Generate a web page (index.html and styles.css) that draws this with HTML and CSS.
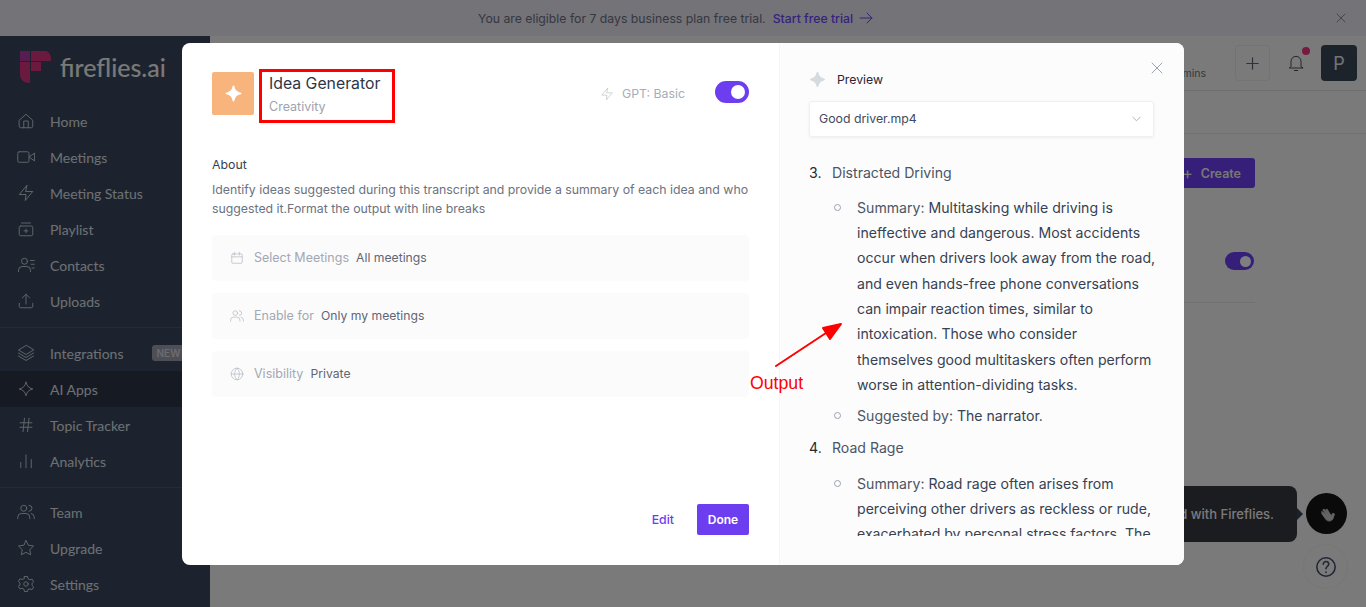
FILE: index.html
```html
<!DOCTYPE html>
<html>
<head>
    <meta charset="utf-8">
    <title>Fireflies.ai - AI Apps</title>
    <link rel="stylesheet" href="styles.css">
</head>
<body>
    <div class="banner">
        <span>You are eligible for 7 days business plan free trial.</span>
        <a class="banner-link">Start free trial</a>
        <svg class="banner-arrow" viewBox="0 0 14 12"><path d="M1 6h12M8 1l5 5-5 5"/></svg>
        <svg class="banner-close" viewBox="0 0 10 10"><path d="M1 1l8 8M9 1l-8 8"/></svg>
    </div>

    <div class="app">
        <div class="sidebar">
            <div class="logo">
                <svg class="logo-mark" viewBox="0 0 31 32">
                    <path class="logo-a" d="M0 0h10v10H0z"/>
                    <path class="logo-b" d="M11 0h14c4 0 6 3 6 10H11zM0 11h10v21c-6 0-10-3-10-9zM11 11h10v9H11z"/>
                </svg>
                <span>fireflies.ai</span>
            </div>

            <div class="nav">
                <div class="nav-item"><svg viewBox="0 0 24 24"><path d="M3 11l9-8 9 8v8a2 2 0 0 1-2 2H5a2 2 0 0 1-2-2zM9 21v-9h6v9"/></svg>Home</div>
                <div class="nav-item"><svg viewBox="0 0 24 24"><rect x="1" y="5" width="15" height="14" rx="2"/><path d="M23 7l-7 5 7 5z"/></svg>Meetings</div>
                <div class="nav-item"><svg viewBox="0 0 24 24"><path d="M13 2L3 14h9l-1 8 10-12h-9z"/></svg>Meeting Status</div>
                <div class="nav-item"><svg viewBox="0 0 24 24"><rect x="3" y="8" width="18" height="13" rx="2"/><path d="M6 4h12M12 12v5M9.500 14.500h5"/></svg>Playlist</div>
                <div class="nav-item"><svg viewBox="0 0 24 24"><circle cx="10" cy="7" r="4"/><path d="M2 21v-2a5 5 0 0 1 5-5h6a5 5 0 0 1 5 5v2M18 6h5M19 11h4M20 16h3"/></svg>Contacts</div>
                <div class="nav-item"><svg viewBox="0 0 24 24"><path d="M3 15v4a2 2 0 0 0 2 2h14a2 2 0 0 0 2-2v-4M12 16V3M7 8l5-5 5 5"/></svg>Uploads</div>
            </div>

            <div class="nav nav-divided nav-tools">
                <div class="nav-item"><svg viewBox="0 0 24 24"><path d="M12 2L2 8l10 6 10-6zM2 12l10 6 10-6M2 16l10 6 10-6"/></svg>Integrations<span class="nav-new">NEW</span></div>
                <div class="nav-item active"><svg viewBox="0 0 24 24"><path d="M12 3c1 5 4 8 9 9-5 1-8 4-9 9-1-5-4-8-9-9 5-1 8-4 9-9z"/></svg>AI Apps</div>
                <div class="nav-item"><svg viewBox="0 0 24 24"><path d="M4 9h16M4 15h16M10 3L8 21M16 3l-2 18"/></svg>Topic Tracker</div>
                <div class="nav-item"><svg viewBox="0 0 24 24"><path d="M5 21v-7M12 21V4M19 21v-11"/></svg>Analytics</div>
            </div>

            <div class="nav nav-divided">
                <div class="nav-item"><svg viewBox="0 0 24 24"><circle cx="9" cy="7" r="4"/><path d="M1 21v-2a5 5 0 0 1 5-5h6a5 5 0 0 1 5 5v2M16 3a4 4 0 0 1 0 8M19 14a5 5 0 0 1 4 5v2"/></svg>Team</div>
                <div class="nav-item"><svg viewBox="0 0 24 24"><path d="M12 2l3.100 6.300 6.900 1-5 4.900 1.200 6.800-6.200-3.200L5.800 21 7 14.200l-5-4.900 6.900-1z"/></svg>Upgrade</div>
                <div class="nav-item"><svg viewBox="0 0 24 24"><circle cx="12" cy="12" r="3"/><path d="M10 2h4l.7 3 2.500 1.400 3-.9 2 3.500-2.200 2.100v2.800l2.200 2.100-2 3.500-3-.9L14.700 19 14 22h-4l-.7-3-2.500-1.400-3 .9-2-3.500L4 13.400v-2.800L1.800 8.500l2-3.500 3 .9L9.300 5z"/></svg>Settings</div>
            </div>
        </div>

        <div class="main">
            <div class="topbar">
                <span class="topbar-mins">mins</span>
                <div class="topbar-add">
                    <svg viewBox="0 0 16 16"><path d="M8 1v14M1 8h14"/></svg>
                </div>
                <div class="topbar-bell">
                    <svg viewBox="0 0 24 24"><path d="M18 16V10a6 6 0 0 0-12 0v6l-2 2h16zM10 21h4"/></svg>
                    <span class="bell-dot"></span>
                </div>
                <div class="avatar">P</div>
            </div>
            <div class="subbar"></div>
            <div class="content">
                <div class="create-row">
                    <div class="create-btn"><span class="create-plus">+</span>Create</div>
                </div>
                <div class="app-row">
                    <span class="toggle toggle-small"><span class="toggle-knob"></span></span>
                </div>
            </div>
        </div>
    </div>

    <div class="toast">Get started with Fireflies.</div>
    <div class="wave">
        <svg viewBox="0 0 24 24"><path d="M6 12l5 7c2 2 6 2 8-1l2-6-2-1-2 3-5-8-1.500 1 3 5-5-6-1.500 1 4 6-5-4z"/></svg>
    </div>
    <div class="help">
        <svg viewBox="0 0 24 24"><circle cx="12" cy="12" r="10"/><path d="M9 9a3 3 0 0 1 6 0c0 2-3 2.500-3 5M12 17.500v.5"/></svg>
    </div>

    <div class="overlay">
        <div class="modal">
            <div class="modal-left">
                <div class="app-head">
                    <div class="app-icon">
                        <svg viewBox="0 0 24 24"><path d="M12 2c1 6 4 9 10 10-6 1-9 4-10 10-1-6-4-9-10-10 6-1 9-4 10-10z"/></svg>
                    </div>
                    <div class="app-title">
                        <div class="app-name">Idea Generator</div>
                        <div class="app-category">Creativity</div>
                    </div>
                    <div class="app-gpt">
                        <svg viewBox="0 0 24 24"><path d="M13 2L3 14h9l-1 8 10-12h-9z"/></svg>
                        GPT: Basic
                    </div>
                    <span class="toggle"><span class="toggle-knob"></span></span>
                </div>

                <div class="about-label">About</div>
                <p class="about-text">Identify ideas suggested during this transcript and provide a summary of each idea and who suggested it.Format the output with line breaks</p>

                <div class="setting">
                    <svg viewBox="0 0 24 24"><rect x="3" y="5" width="18" height="16" rx="2"/><path d="M3 10h18M8 2v5M16 2v5"/></svg>
                    <span class="setting-label">Select Meetings</span>
                    <span class="setting-value">All meetings</span>
                </div>
                <div class="setting">
                    <svg viewBox="0 0 24 24"><circle cx="9" cy="7" r="4"/><path d="M1 21v-2a5 5 0 0 1 5-5h6a5 5 0 0 1 5 5v2M16 3a4 4 0 0 1 0 8M19 14a5 5 0 0 1 4 5v2"/></svg>
                    <span class="setting-label">Enable for</span>
                    <span class="setting-value">Only my meetings</span>
                </div>
                <div class="setting">
                    <svg viewBox="0 0 24 24"><circle cx="12" cy="12" r="10"/><path d="M2 12h20M12 2c3 3 4 6 4 10s-1 7-4 10c-3-3-4-6-4-10s1-7 4-10z"/></svg>
                    <span class="setting-label">Visibility</span>
                    <span class="setting-value">Private</span>
                </div>

                <div class="actions">
                    <span class="edit-link">Edit</span>
                    <span class="done-btn">Done</span>
                </div>
            </div>

            <div class="modal-right">
                <svg class="modal-close" viewBox="0 0 12 12"><path d="M1 1l10 10M11 1L1 11"/></svg>
                <div class="preview-head">
                    <svg viewBox="0 0 24 24"><path d="M12 3c1 5 4 8 9 9-5 1-8 4-9 9-1-5-4-8-9-9 5-1 8-4 9-9z"/></svg>
                    Preview
                </div>
                <div class="preview-select">
                    Good driver.mp4
                    <svg viewBox="0 0 10 6"><path d="M1 1l4 4 4-4"/></svg>
                </div>
                <div class="output">
                    <ol class="output-list">
                        <li>Distracted Driving
                            <ul>
                                <li><span class="output-key">Summary:</span> Multitasking while driving is ineffective and dangerous. Most accidents occur when drivers look away from the road, and even hands-free phone conversations can impair reaction times, similar to intoxication. Those who consider themselves good multitaskers often perform worse in attention-dividing tasks.</li>
                                <li><span class="output-key">Suggested by:</span> The narrator.</li>
                            </ul>
                        </li>
                        <li>Road Rage
                            <ul>
                                <li><span class="output-key">Summary:</span> Road rage often arises from perceiving other drivers as reckless or rude, exacerbated by personal stress factors. The</li>
                            </ul>
                        </li>
                    </ol>
                </div>
            </div>

            <!-- annotations drawn on top of the screenshot -->
            <div class="note-box"></div>
            <svg class="note-arrow" viewBox="0 0 70 46">
                <path d="M3 44L56 9" />
                <polygon points="68,2 50,6 57,17"/>
            </svg>
            <span class="note-text">Output</span>
        </div>
    </div>
</body>
</html>
```

FILE: styles.css
```css
* {
    box-sizing: border-box;
}

html, body {
    height: 100%;
}

body {
    margin: 0;
    overflow: hidden;
    background: #f5f5f5;
    font-family: "Inter", "Liberation Sans", sans-serif;
    font-size: 12.3px;
    color: #374151;
}

svg {
    fill: none;
    stroke: currentColor;
    stroke-linecap: round;
    stroke-linejoin: round;
}

/* banner */
.banner {
    display: flex;
    align-items: center;
    height: 36px;
    padding: 0 20px 0 478px;
    background: #e6e6f0;
    color: #6f6f84;
    font-size: 12.25px;
}

.banner-link {
    margin-left: 7px;
    color: #6d45ff;
    font-weight: 500;
}

.banner-arrow {
    width: 14px;
    height: 12px;
    margin-left: 6px;
    color: #6d45ff;
}

.banner-close {
    width: 10px;
    height: 10px;
    margin-left: auto;
    color: #8b8b9c;
}

.app {
    display: flex;
    height: 571px;
}

/* sidebar */
.sidebar {
    width: 210px;
    flex: none;
    background: #38465c;
    color: #dde0e6;
    font-family: "Lato", "Liberation Sans", sans-serif;
    font-size: 14px;
}

.logo {
    display: flex;
    align-items: center;
    gap: 9px;
    height: 62px;
    padding: 0 0 0 20px;
    font-size: 25px;
    font-weight: 500;
    color: #f2f2f2;
}

.logo-mark {
    width: 31px;
    height: 32px;
    stroke: none;
}

.logo-a {
    fill: #b03aa0;
}

.logo-b {
    fill: #d9327e;
}

.nav {
    padding-top: 5px;
}

.nav-divided {
    margin-top: 8px;
    padding-top: 6px;
    border-top: 1px solid #4a576b;
}

.nav-tools {
    padding-top: 7px;
}

.nav-item {
    display: flex;
    align-items: center;
    height: 36px;
    padding-left: 17px;
}

.nav-item svg {
    width: 18px;
    height: 18px;
    margin-right: 15px;
    stroke-width: 1.3;
    color: #c6cad2;
}

.nav-item.active {
    background: #2d3646;
}

.nav-new {
    width: 40px;
    margin-left: 29px;
    padding: 2px 4px;
    border-radius: 3px;
    background: #9a9dad;
    color: #d8d8de;
    font-family: "Inter", sans-serif;
    font-size: 10px;
    font-weight: 600;
}

/* main page behind the modal */
.main {
    flex: 1;
    min-width: 0;
}

.topbar {
    display: flex;
    align-items: center;
    justify-content: flex-end;
    height: 55px;
    padding-right: 9px;
    border-bottom: 1px solid #dedede;
    background: #f5f5f5;
}

.topbar-mins {
    margin: 20px 29px 0 0;
    font-size: 10.500px;
    color: #6b7280;
}

.topbar-add {
    display: flex;
    align-items: center;
    justify-content: center;
    width: 35px;
    height: 36px;
    border: 1px solid #e7e7e7;
    border-radius: 4px;
    color: #5e6578;
}

.topbar-add svg {
    width: 13px;
    height: 13px;
    stroke-width: 1.5;
}

.topbar-bell {
    position: relative;
    width: 20px;
    height: 20px;
    margin: 0 15px 0 16px;
    color: #1f2937;
}

.bell-dot {
    position: absolute;
    top: -6px;
    right: -4px;
    width: 8px;
    height: 8px;
    border-radius: 50%;
    background: #f0337f;
}

.avatar {
    display: flex;
    align-items: center;
    justify-content: center;
    width: 36px;
    height: 36px;
    border-radius: 4px;
    background: #3b4657;
    color: #e5e7eb;
    font-size: 18px;
}

.subbar {
    height: 43px;
    border-bottom: 1px solid #e2e2e2;
}

.content {
    padding: 24px 111px 0 0;
}

.create-row {
    display: flex;
    justify-content: flex-end;
}

.create-btn {
    display: flex;
    align-items: center;
    justify-content: flex-end;
    width: 90px;
    height: 30px;
    padding-right: 14px;
    border-radius: 3px;
    background: #6d3ef0;
    color: #eee;
    font-weight: 600;
    font-size: 12.5px;
}

.create-plus {
    margin-right: 8px;
    font-size: 16px;
    font-weight: 400;
}

.app-row {
    display: flex;
    justify-content: flex-end;
    height: 115px;
    margin-left: 800px;
    padding: 64px 1px 0 0;
    border-bottom: 1px solid #e2e2e2;
}

/* floating widgets */
.toast {
    position: absolute;
    top: 486px;
    right: 69px;
    display: flex;
    align-items: center;
    justify-content: flex-end;
    width: 300px;
    height: 56px;
    padding-right: 23px;
    border-radius: 8px;
    background: #36383e;
    color: #f4f4f8;
    font-size: 13px;
    font-weight: 500;
}

.toast::after {
    content: "";
    position: absolute;
    top: 22px;
    left: 100%;
    border-left: 6px solid #36405c;
    border-top: 6px solid transparent;
    border-bottom: 6px solid transparent;
}

.wave {
    position: absolute;
    top: 493px;
    left: 1306px;
    display: flex;
    align-items: center;
    justify-content: center;
    width: 41px;
    height: 41px;
    border-radius: 50%;
    background: #141414;
    color: #c9c9c9;
}

.wave svg {
    width: 20px;
    height: 20px;
    fill: currentColor;
    stroke-width: 1;
}

.help {
    position: absolute;
    top: 544px;
    left: 1303px;
    display: flex;
    align-items: center;
    justify-content: center;
    width: 45px;
    height: 45px;
    border: 1px solid #ececec;
    border-radius: 50%;
    color: #424b6a;
}

.help svg {
    width: 22px;
    height: 22px;
    stroke-width: 1.700;
}

/* modal */
.overlay {
    position: fixed;
    top: 0;
    left: 0;
    right: 0;
    bottom: 0;
    display: flex;
    align-items: center;
    justify-content: center;
    background: rgba(0, 0, 0, 0.5);
}

.modal {
    position: relative;
    display: flex;
    width: 1002px;
    height: 522px;
    border-radius: 8px;
    overflow: hidden;
    background: #fff;
}

.modal-left {
    display: flex;
    flex-direction: column;
    width: 598px;
    padding: 29px 30px 30px;
    border-right: 1px solid #f5f5f6;
}

.app-head {
    display: flex;
    align-items: flex-start;
    height: 43px;
}

.app-icon {
    display: flex;
    align-items: center;
    justify-content: center;
    width: 42px;
    height: 43px;
    border-radius: 2px;
    background: #f8b47d;
    color: #fff;
}

.app-icon svg {
    width: 17px;
    height: 17px;
    fill: currentColor;
    stroke-width: 2.500;
}

.app-title {
    margin-left: 15px;
}

.app-name {
    margin-top: 1px;
    font-size: 15.800px;
    line-height: 22px;
    color: #2c3646;
}

.app-category {
    margin-top: 2px;
    line-height: 20px;
    font-size: 12.500px;
    color: #9ca3af;
}

.app-gpt {
    display: flex;
    align-items: center;
    margin: 12px 30px 0 auto;
    height: 20px;
    color: #a6acb8;
}

.app-gpt svg {
    width: 14px;
    height: 14px;
    margin-right: 8px;
    stroke-width: 1.300;
    color: #c2c6ce;
}

.toggle {
    display: flex;
    align-items: center;
    justify-content: flex-end;
    width: 34px;
    height: 22px;
    margin-top: 9px;
    padding-right: 4px;
    border-radius: 11px;
    background: #6d3ef0;
}

.toggle-knob {
    width: 14px;
    height: 14px;
    border-radius: 50%;
    background: #fff;
}

.toggle-small {
    width: 29px;
    height: 18px;
    margin-top: 0;
    padding-right: 3px;
}

.toggle-small .toggle-knob {
    width: 11px;
    height: 11px;
}

.about-label {
    margin-top: 42px;
    line-height: 16px;
    color: #374151;
}

.about-text {
    margin: 7px 0 17px;
    line-height: 19px;
    color: #6b7280;
}

.setting {
    display: flex;
    align-items: center;
    height: 46px;
    margin-bottom: 12px;
    padding-left: 18px;
    border-radius: 4px;
    background: #fbfbfc;
}

.setting svg {
    width: 14px;
    height: 14px;
    margin-right: 10px;
    stroke-width: 1.200;
    color: #b4b8c1;
}

.setting-label {
    margin-right: 7px;
    color: #a3a8b3;
    font-size: 12.500px;
}

.setting-value {
    color: #5f6673;
    font-size: 12.200px;
}

.actions {
    display: flex;
    align-items: center;
    justify-content: flex-end;
    margin-top: auto;
}

.edit-link {
    margin-right: 23px;
    color: #6d3ef0;
    font-weight: 500;
}

.done-btn {
    display: flex;
    align-items: center;
    justify-content: center;
    width: 52px;
    height: 31px;
    border-radius: 2px;
    background: #6d3ef0;
    color: #fff;
    font-size: 12px;
    font-weight: 600;
}

.modal-right {
    position: relative;
    flex: 1;
    padding: 0 30px 0 29px;
    background: #fcfcfd;
}

.modal-close {
    position: absolute;
    top: 19px;
    right: 21px;
    width: 12px;
    height: 12px;
    color: #9ca3af;
}

.preview-head {
    display: flex;
    align-items: center;
    height: 16px;
    margin-top: 29px;
    color: #2b2438;
}

.preview-head svg {
    width: 17px;
    height: 17px;
    margin: 0 11px 0 0;
    fill: #d5dbe0;
    stroke: #d5dbe0;
    stroke-width: 3;
}

.preview-select {
    display: flex;
    align-items: center;
    justify-content: space-between;
    height: 36px;
    margin-top: 13px;
    padding: 0 12px 0 9px;
    border: 1px solid #f0f0f2;
    border-radius: 3px;
    background: #fff;
    box-shadow: 0 1px 3px rgba(0, 0, 0, 0.06);
    color: #3f4a5e;
}

.preview-select svg {
    width: 9px;
    height: 6px;
    color: #a6acb8;
}

.output {
    height: 399px;
    margin-right: -2px;
    overflow: hidden;
    font-size: 14.100px;
    line-height: 25.300px;
    color: #4b5563;
}

.output-key {
    color: #4b5563;
}

.output-list {
    margin: 23px 0 0;
    padding: 0 0 0 23px;
    list-style: none;
    counter-reset: item 2;
}

.output-list > li {
    margin-bottom: 7px;
    counter-increment: item;
}

.output-list > li::before {
    content: counter(item) ".";
    display: inline-block;
    width: 23px;
    margin-left: -23px;
    color: #1f2937;
}

.output-list ul {
    margin: 10px 0 0;
    padding: 0 0 0 25px;
    list-style: none;
}

.output-list ul li {
    margin-bottom: 6px;
    color: #374151;
}

.output-list ul li::before {
    content: "";
    display: inline-block;
    width: 5px;
    height: 5px;
    margin: 0 16px 2px -23px;
    border: 1px solid #9ca3af;
    border-radius: 50%;
}

/* annotations */
.note-box {
    position: absolute;
    top: 26px;
    left: 77px;
    width: 136px;
    height: 54px;
    border: 3px solid #f00;
}

.note-arrow {
    position: absolute;
    top: 279px;
    left: 591px;
    width: 70px;
    height: 46px;
    color: #f00;
    stroke-width: 2;
}

.note-arrow polygon {
    fill: #f00;
}

.note-text {
    position: absolute;
    top: 330px;
    left: 568px;
    color: #f00;
    font-family: "Liberation Sans", sans-serif;
    font-size: 17.700px;
}
```
